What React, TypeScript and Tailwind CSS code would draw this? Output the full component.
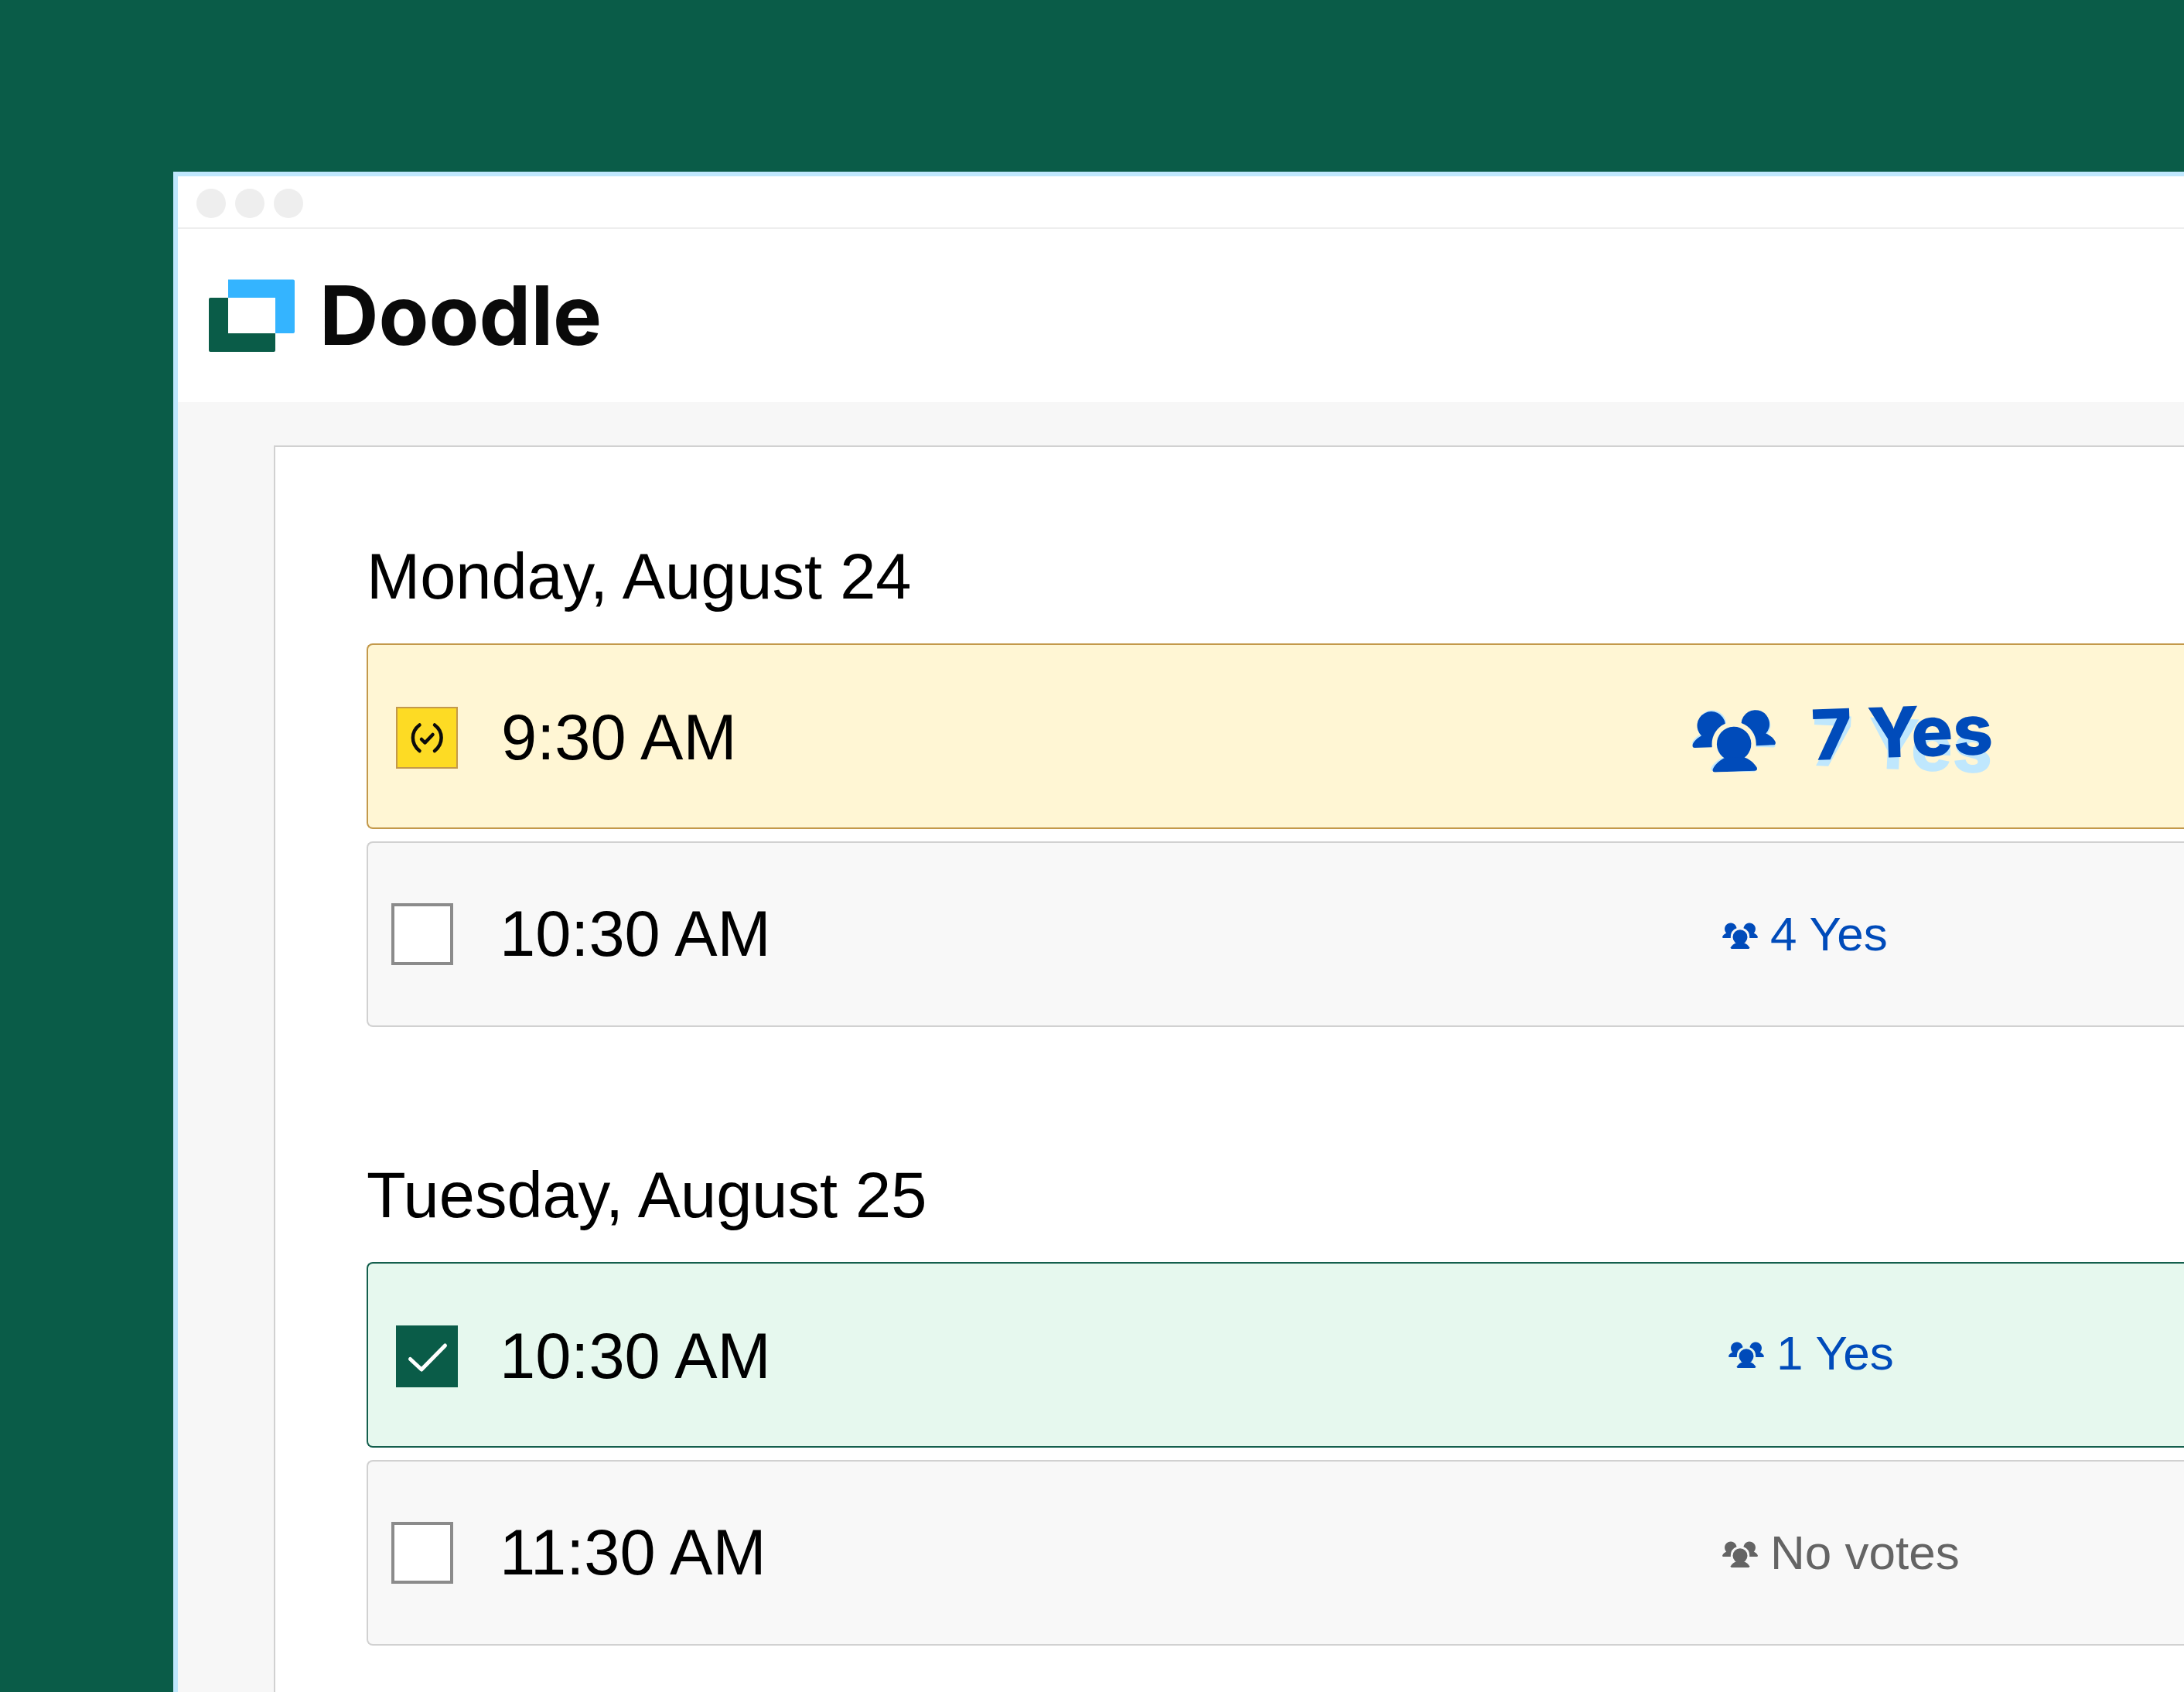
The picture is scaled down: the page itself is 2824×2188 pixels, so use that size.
type Status = 'maybe' | 'yes' | 'none'

type Slot = {
  id: string
  time: string
  votes: string
  status: Status
  top?: boolean
  muted?: boolean
}

const days: { name: string; slots: Slot[] }[] = [
  {
    name: 'Monday, August 24',
    slots: [
      { id: 'mon-0930', time: '9:30 AM', votes: '7 Yes', status: 'maybe', top: true },
      { id: 'mon-1030', time: '10:30 AM', votes: '4 Yes', status: 'none' },
    ],
  },
  {
    name: 'Tuesday, August 25',
    slots: [
      { id: 'tue-1030', time: '10:30 AM', votes: '1 Yes', status: 'yes' },
      { id: 'tue-1130', time: '11:30 AM', votes: 'No votes', status: 'none', muted: true },
    ],
  },
]

const rowStyles: Record<Status, string> = {
  maybe: 'border-[#c3994b] bg-[#fff6d4] pl-9 pt-1',
  yes: 'border-[#145f4d] bg-[#e6f8ee] pl-9 pt-1',
  none: 'border-[#d1d1d1] bg-[#f8f8f8] pl-[30px]',
}

const boxStyles: Record<Status, string> = {
  maybe: 'border-2 border-[#c3994b] bg-[#fddb24]',
  yes: 'bg-[#0a5c48]',
  none: 'border-4 border-[#8b8b8b] bg-white',
}

const timeStyles: Record<Status, string> = {
  maybe: 'ml-14',
  yes: 'ml-[54px]',
  none: 'ml-[60px]',
}

function LogoMark() {
  return (
    <svg viewBox="0 0 111 94" className="w-[111px] h-[94px]" aria-hidden="true">
      <path d="M25 0.5H109Q111 0.5 111 2.5V68Q111 70 109 70H86V24H25Z" fill="#34b4ff" />
      <path d="M2 24H25V70H86V92Q86 94 84 94H2Q0 94 0 92V26Q0 24 2 24Z" fill="#0a5c48" />
    </svg>
  )
}

function PeopleIcon({ className }: { className: string }) {
  const side = 'M32 59V55A36 36 0 0 1 54.9 21.4A23 23 0 1 0 15.5 40C9 43 3 48 0.5 54Q-0.5 59 4 59Z'
  return (
    <svg viewBox="0 0 136 100" fill="currentColor" className={className} aria-hidden="true">
      <path d={side} />
      <path d={side} transform="translate(136 0) scale(-1 1)" />
      <circle cx="68" cy="55" r="28" />
      <path d="M53 77C45 80 37 86 32 95Q31 100 36 100H100Q105 100 104 95C99 86 91 80 83 77Z" />
    </svg>
  )
}

function SlotCheckbox({ id, status }: { id: string; status: Status }) {
  return (
    <span className="relative block w-20 h-20 shrink-0">
      <input
        id={id}
        type="checkbox"
        defaultChecked={status !== 'none'}
        className={`block appearance-none w-20 h-20 ${boxStyles[status]}`}
      />
      {status === 'maybe' && (
        <svg viewBox="0 0 80 80" fill="none" stroke="#0b0b0b" strokeWidth="4.5" strokeLinecap="round" strokeLinejoin="round" className="absolute inset-0 pointer-events-none">
          <path d="M30.5 23.5C19 32 19 48 30.5 57" />
          <path d="M50 23.5C61.5 32 61.5 48 50 57" />
          <path d="M33 42L37.5 46.5L47.5 36" />
        </svg>
      )}
      {status === 'yes' && (
        <svg viewBox="0 0 80 80" fill="none" stroke="white" strokeWidth="5" strokeLinecap="round" strokeLinejoin="round" className="absolute inset-0 pointer-events-none">
          <path d="M18.5 43.5L33 57L63.5 26" />
        </svg>
      )}
    </span>
  )
}

function TopVotes({ votes }: { votes: string }) {
  return (
    <div className="flex items-center gap-[46px] w-[636px] shrink-0 text-[#004bba]">
      <span className="relative mt-2">
        <PeopleIcon className="absolute inset-0 w-[108px] h-20 rotate-[1.5deg] text-[#bfe7fd]" />
        <PeopleIcon className="relative w-[108px] h-20 -rotate-2" />
      </span>
      {/* The light copy behind the count is tilted the other way */}
      <span
        data-votes={votes}
        className="relative mb-[14px] font-[Inter,sans-serif] text-[90px] leading-[96px] font-extrabold whitespace-nowrap before:absolute before:left-0 before:top-4 before:rotate-[2.5deg] before:text-[#bfe7fd] before:content-[attr(data-votes)]"
      >
        <span className="relative block -rotate-2">{votes}</span>
      </span>
    </div>
  )
}

function Votes({ slot }: { slot: Slot }) {
  return (
    <div className={`flex items-center gap-4 shrink-0 ${slot.status === 'yes' ? 'w-[589px] pb-2' : 'w-[597px]'} ${slot.muted ? 'text-[#646464]' : 'text-[#004bba]'}`}>
      <PeopleIcon className="mt-1 w-[46px] h-[34px]" />
      <span className="text-[62px] leading-[72px] whitespace-nowrap">{slot.votes}</span>
    </div>
  )
}

export default function App() {
  return (
    <div className="min-h-screen flex flex-col overflow-hidden bg-[#0a5c48] pt-[222px] pl-[224px] font-['Liberation_Sans',Arial,sans-serif] text-black">
      <div className="flex-1 flex flex-col border-t-6 border-l-6 border-[#bfe7fd] bg-white">

        {/* Browser chrome */}
        <div className="flex gap-3 h-[68px] pt-4 pl-6 border-b-2 border-[#eeeeee]">
          <span className="w-[38px] h-[38px] rounded-full bg-[#eeeeee]" />
          <span className="w-[38px] h-[38px] rounded-full bg-[#eeeeee]" />
          <span className="w-[38px] h-[38px] rounded-full bg-[#eeeeee]" />
        </div>

        <header className="flex items-center h-[224px] pl-10">
          <a href="#" className="flex items-center gap-8 text-[#0a0a0a]">
            <LogoMark />
            <span className="font-[Inter,sans-serif] text-[106px] leading-[112px] font-bold">Doodle</span>
          </a>
        </header>

        <main className="flex-1 flex flex-col bg-[#f7f7f7] pt-14 pl-[124px]">
          <div className="flex-1 flex flex-col gap-[170px] border-t-2 border-l-2 border-[#d1d1d1] bg-white pt-[120px] pb-[60px] pl-[118px]">
            {days.map(day => (
              <section key={day.name}>
                <h2 className="mb-[38px] text-[83px] leading-[96px]">{day.name}</h2>
                <ul className="flex flex-col gap-4">
                  {day.slots.map(slot => (
                    <li key={slot.id} className={`flex items-center h-60 border-2 border-r-0 rounded-l-lg ${rowStyles[slot.status]}`}>
                      <SlotCheckbox id={slot.id} status={slot.status} />
                      <label htmlFor={slot.id} className={`flex-1 text-[83px] leading-[96px] ${timeStyles[slot.status]}`}>
                        {slot.time}
                      </label>
                      {slot.top ? <TopVotes votes={slot.votes} /> : <Votes slot={slot} />}
                    </li>
                  ))}
                </ul>
              </section>
            ))}
          </div>
        </main>
      </div>
    </div>
  )
}
